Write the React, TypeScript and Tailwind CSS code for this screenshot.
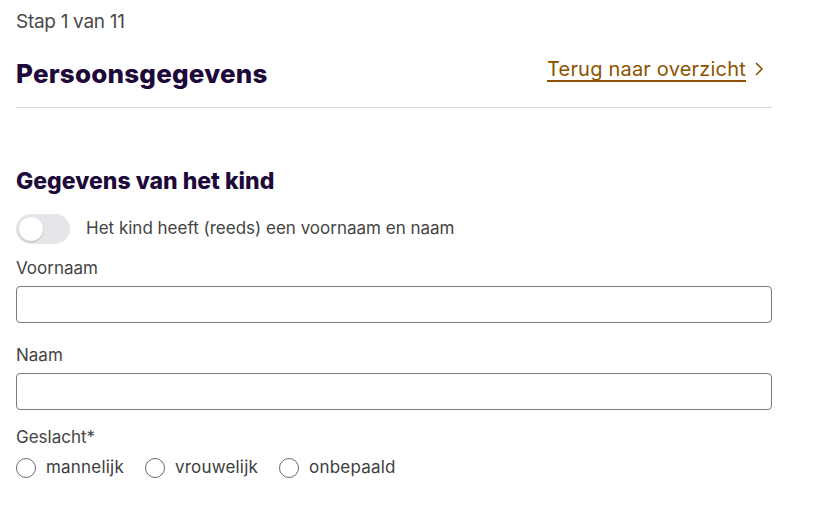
import { useState } from "react";

const Radio = ({ label, checked, onClick }: { label: string; checked: boolean; onClick: () => void }) => (
  <label className="flex items-center cursor-pointer" onClick={onClick}>
    <span className="w-[20px] h-[20px] rounded-full border-[1.5px] border-[#6b6676] bg-white flex items-center justify-center">
      {checked && <span className="w-[10px] h-[10px] rounded-full bg-[#2b0a4a]" />}
    </span>
    <span className="ml-[10px] text-[17px] text-[#3d3d3d] tracking-[0.2px]">{label}</span>
  </label>
);

const App = () => {
  const [hasName, setHasName] = useState(false);
  const [gender, setGender] = useState(""); // gekozen geslacht

  return (
    <div className="w-[816px] h-[515px] bg-white font-['Inter',sans-serif] overflow-hidden">
      <div className="w-[756px] ml-[16px]">
        <div className="pt-[9px] text-[19px] leading-[26px] text-[#4a4a4a] tracking-[-0.3px]">Stap 1 van 11</div>

        <div className="flex justify-between items-start mt-[23px] pb-[17px] border-b border-[#d9d9d9]">
          <h1 className="font-extrabold text-[26px] leading-[32px] text-[#1d0a3a] tracking-[0.2px]">Persoonsgegevens</h1>
          <a href="#" className="flex items-center mr-[6px] mt-[-4px] text-[20px] text-[#8d5200] underline decoration-[1.5px] underline-offset-[4px] tracking-[0.2px]">
            Terug naar overzicht
            <svg width="14" height="16" viewBox="0 0 14 16" className="ml-[6px]" fill="none" stroke="#8d5200" strokeWidth="1.6">
              <path d="M4 2l6 6-6 6" />
            </svg>
          </a>
        </div>

        <h2 className="mt-[59px] font-extrabold text-[23px] leading-[28px] text-[#1d0a3a] tracking-[0px]">Gegevens van het kind</h2>

        <div className="flex items-center mt-[19px]">
          <button
            className={`w-[54px] h-[30px] rounded-full p-[3px] flex ${hasName ? "bg-[#2b0a4a] justify-end" : "bg-[#e6e6ea] justify-start"}`}
            onClick={() => setHasName(!hasName)}
          >
            <span className="w-[24px] h-[24px] rounded-full bg-white shadow-[0_1px_2px_rgba(0,0,0,0.2)]" />
          </button>
          <span className="ml-[16px] text-[17px] text-[#444]">Het kind heeft (reeds) een voornaam en naam</span>
        </div>

        <label className="block mt-[12px] text-[17px] text-[#444] leading-[24px]">Voornaam</label>
        <input className="block mt-[6px] w-full h-[37px] border border-[#7d7688] rounded-[4px] px-3 outline-none" />

        <label className="block mt-[20px] text-[17px] text-[#444] leading-[24px]">Naam</label>
        <input className="block mt-[6px] w-full h-[37px] border border-[#7d7688] rounded-[4px] px-3 outline-none" />

        <label className="block mt-[15px] text-[17px] text-[#444] leading-[24px]">Geslacht*</label>
        <div className="flex items-center gap-[21px] mt-[6px]">
          <Radio label="mannelijk" checked={gender === "m"} onClick={() => setGender("m")} />
          <Radio label="vrouwelijk" checked={gender === "v"} onClick={() => setGender("v")} />
          <Radio label="onbepaald" checked={gender === "o"} onClick={() => setGender("o")} />
        </div>
      </div>
    </div>
  );
};

export default App;
